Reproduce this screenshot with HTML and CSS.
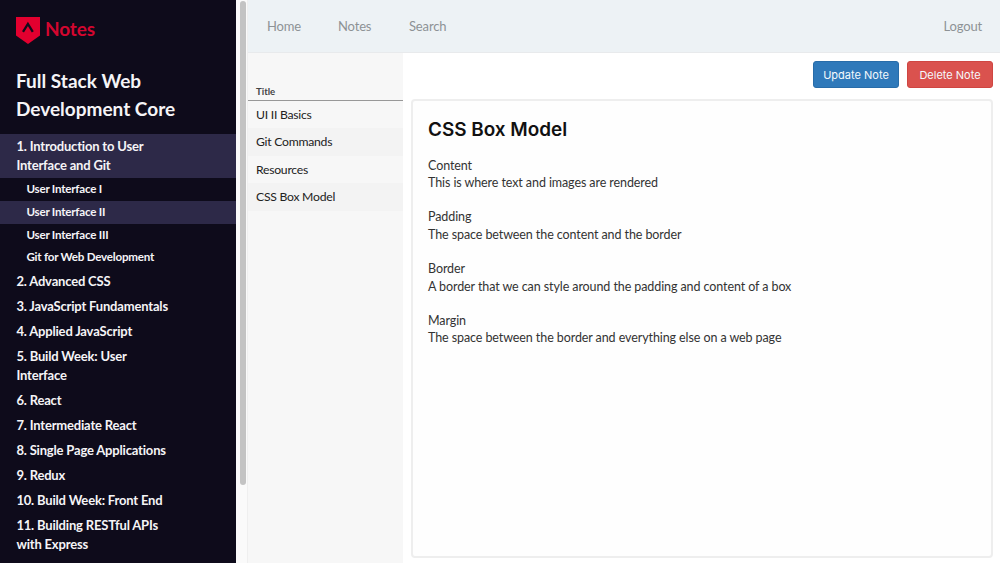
FILE: index.html
```html
<!DOCTYPE html>
<html lang="en">
<head>
<meta charset="utf-8">
<title>Notes</title>
<link rel="stylesheet" href="styles.css">
</head>
<body>
<div class="app">
  <aside class="sidebar">
    <div class="brand">
      <svg class="logo" width="24" height="27" viewBox="0 0 24 27"><path d="M0 0H24V18.5L12 27L0 18.5Z" fill="#e3002f"/><path d="M7 14.8L11.9 7L16.8 14.8" fill="none" stroke="#100c1c" stroke-width="2.3"/></svg>
      <span class="brand-name">Notes</span>
    </div>
    <h1 class="course">Full Stack Web<br>Development Core</h1>
    <nav class="menu">
      <a class="item active">1. Introduction to User<br>Interface and Git</a>
      <a class="sub">User Interface I</a>
      <a class="sub active">User Interface II</a>
      <a class="sub">User Interface III</a>
      <a class="sub">Git for Web Development</a>
      <a class="item">2. Advanced CSS</a>
      <a class="item">3. JavaScript Fundamentals</a>
      <a class="item">4. Applied JavaScript</a>
      <a class="item">5. Build Week: User<br>Interface</a>
      <a class="item">6. React</a>
      <a class="item">7. Intermediate React</a>
      <a class="item">8. Single Page Applications</a>
      <a class="item">9. Redux</a>
      <a class="item">10. Build Week: Front End</a>
      <a class="item">11. Building RESTful APIs<br>with Express</a>
    </nav>
  </aside>
  <div class="scroll-track"><div class="scroll-thumb"></div></div>
  <div class="main">
    <header class="topbar">
      <a class="home">Home</a><a class="notes">Notes</a><a>Search</a><a class="logout">Logout</a>
    </header>
    <div class="body">
      <section class="list">
        <div class="list-head">Title</div>
        <a class="row">UI II Basics</a>
        <a class="row alt">Git Commands</a>
        <a class="row">Resources</a>
        <a class="row alt">CSS Box Model</a>
      </section>
      <section class="content">
        <div class="actions">
          <button class="btn update">Update Note</button>
          <button class="btn delete">Delete Note</button>
        </div>
        <article class="note">
          <h2 class="note-title">CSS Box Model</h2>
          <p>Content<br>This is where text and images are rendered</p>
          <p>Padding<br>The space between the content and the border</p>
          <p>Border<br>A border that we can style around the padding and content of a box</p>
          <p>Margin<br>The space between the border and everything else on a web page</p>
        </article>
      </section>
    </div>
  </div>
</div>
</body>
</html>
```
FILE: styles.css
```css
* { box-sizing: border-box; }
body { margin: 0; font-family: Lato, sans-serif; background: #fff; overflow: hidden; }
.app { display: flex; height: 563px; }
.sidebar { width: 236px; flex: none; background: #0e0b1b; color: #f5f4f7; overflow: hidden; }
.brand { display: flex; gap: 5px; padding: 17px 0 0 16px; height: 66px; }
.logo { flex: none; }
.brand-name { color: #d3062f; font-size: 19px; font-weight: 700; line-height: 24px; letter-spacing: -.1px; }
.course { margin: 0; padding: 1px 0 0 16px; height: 68px; font-size: 19px; font-weight: 700; line-height: 28px; }
.menu { display: flex; flex-direction: column; }
.item { padding: 3.2px 0 2.8px 16.4px; font-size: 13px; font-weight: 700; line-height: 19px; letter-spacing: -.18px; }
.sub { padding: 0 0 0 26.4px; font-size: 11.6px; font-weight: 700; line-height: 22.8px; letter-spacing: -.22px; }
.active { background: #2d2948; }
.scroll-track { width: 12px; flex: none; background: #fafafa; border-right: 1px solid #efefef; padding: 1px 0 0 4px; }
.scroll-thumb { width: 6px; height: 484px; border-radius: 3px; background: #c3c3c3; }
.main { flex: 1; display: flex; flex-direction: column; min-width: 0; }
.topbar { display: flex; height: 53px; background: #edf2f5; border-bottom: 1px solid #e8eaec; padding: 0 18px 0 19px; font-size: 13px; line-height: 52px; color: #8d9295; letter-spacing: -.15px; }
.home, .notes { width: 71px; }
.logout { margin-left: auto; }
.body { flex: 1; display: flex; }
.list { width: 155px; flex: none; background: #f7f7f7; color: #222; }
.list-head { height: 48px; padding: 30px 0 0 8px; border-bottom: 1px solid #989898; font-size: 9.6px; line-height: 17px; font-weight: 700; color: #444; }
.row { display: block; height: 27.4px; padding-left: 8px; font-size: 12.2px; line-height: 28px; letter-spacing: -.25px; }
.alt { background: #f3f3f3; }
.content { flex: 1; display: flex; flex-direction: column; padding: 8px 7px 5px 8px; }
.actions { display: flex; justify-content: flex-end; gap: 8px; height: 38px; }
.btn { width: 86px; height: 27px; border-radius: 3px; padding: 0; color: #f5f9fd; font: 11px Inter, sans-serif; }
.update { background: #2f79ba; border: 1px solid #286ca9; }
.delete { background: #da524e; border: 1px solid #cf4642; }
.note { flex: 1; border: 2px solid #eee; border-radius: 4px; padding: 18px 15px 17px; background: #fefefe; }
.note-title { margin: 0 0 15.7px; font: 600 18.9px/22px Inter, sans-serif; color: #111; }
.note p { margin: 0 0 17.2px; font-size: 12.5px; line-height: 17.3px; color: #333; letter-spacing: -.09px; }
```
